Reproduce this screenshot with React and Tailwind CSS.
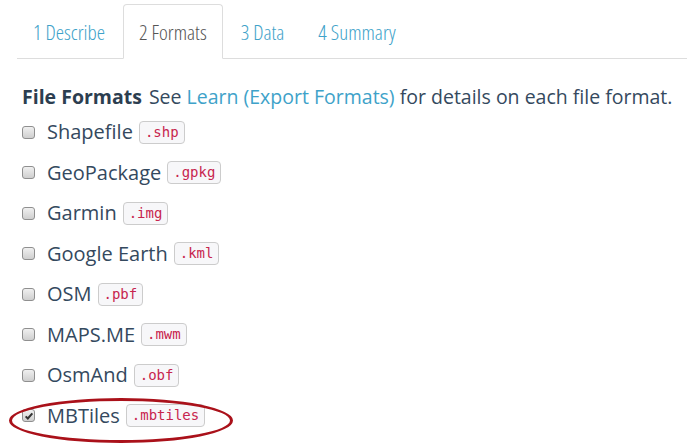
import React from 'react'

const tabs = ['1 Describe', '2 Formats', '3 Data', '4 Summary']

const formats = [
  { name: 'Shapefile', ext: '.shp' },
  { name: 'GeoPackage', ext: '.gpkg' },
  { name: 'Garmin', ext: '.img' },
  { name: 'Google Earth', ext: '.kml' },
  { name: 'OSM', ext: '.pbf' },
  { name: 'MAPS.ME', ext: '.mwm' },
  { name: 'OsmAnd', ext: '.obf' },
  { name: 'MBTiles', ext: '.mbtiles', checked: true },
]

const Checkbox = ({ checked }) => (
  <span className="relative flex h-[13px] w-[13px] items-center justify-center rounded-[3px] border border-[#8f8f8f] bg-gradient-to-b from-[#f0f0f0] to-[#cfcfcf]">
    {checked && (
      <svg viewBox="0 0 12 12" className="h-[10px] w-[10px]">
        <path d="M2 6.4 L4.6 9 L10 2.8" fill="none" stroke="#333" strokeWidth="2.4" />
      </svg>
    )}
  </span>
)

export default function App() {
  return (
    <div className="h-[445px] w-[687px] overflow-hidden bg-white font-['Open_Sans',sans-serif] text-[#34495e]">
      <ul className="ml-[17px] mt-[4px] flex border-b border-[#dddddd]">
        {tabs.map((t, i) => (
          <li key={t} className="mr-[2px] -mb-px">
            <span
              className={
                'block h-[55px] rounded-t-[4px] border px-[15px] pt-[13px] text-[21px] font-light font-stretch-condensed leading-[28px] ' +
                (i === 1
                  ? 'border-[#dddddd] border-b-white bg-white text-[#555555]'
                  : 'border-transparent text-[#3ea2c9]')
              }
            >
              {t}
            </span>
          </li>
        ))}
      </ul>

      <div className="ml-[22px] mt-[26px] text-[19.5px] leading-[24px]">
        <span className="font-bold text-[#2c3e50]">File Formats</span>
        <span className="ml-[7px]">See </span>
        <span className="text-[#3ea2c9]">Learn (Export Formats)</span>
        <span> for details on each file format.</span>
      </div>

      <div className="relative ml-[22px] mt-[11px] flex flex-col gap-[16.5px]">
        {formats.map((f) => (
          <div key={f.name} className="flex h-[24px] items-center">
            <Checkbox checked={f.checked} />
            <span className="ml-[12px] text-[20px] leading-[24px]">{f.name}</span>
            <code className="ml-[6px] rounded-[4px] border border-[#cccccc] bg-[#f7f7f9] px-[5px] font-['DejaVu_Sans_Mono',monospace] text-[14px] leading-[21px] text-[#c7254e]">
              {f.ext}
            </code>
          </div>
        ))}
        <div className="pointer-events-none absolute bottom-[-15px] left-[-13px] h-[45px] w-[224px] rounded-[50%] border-[3px] border-[#aa111a]" />
      </div>
    </div>
  )
}
